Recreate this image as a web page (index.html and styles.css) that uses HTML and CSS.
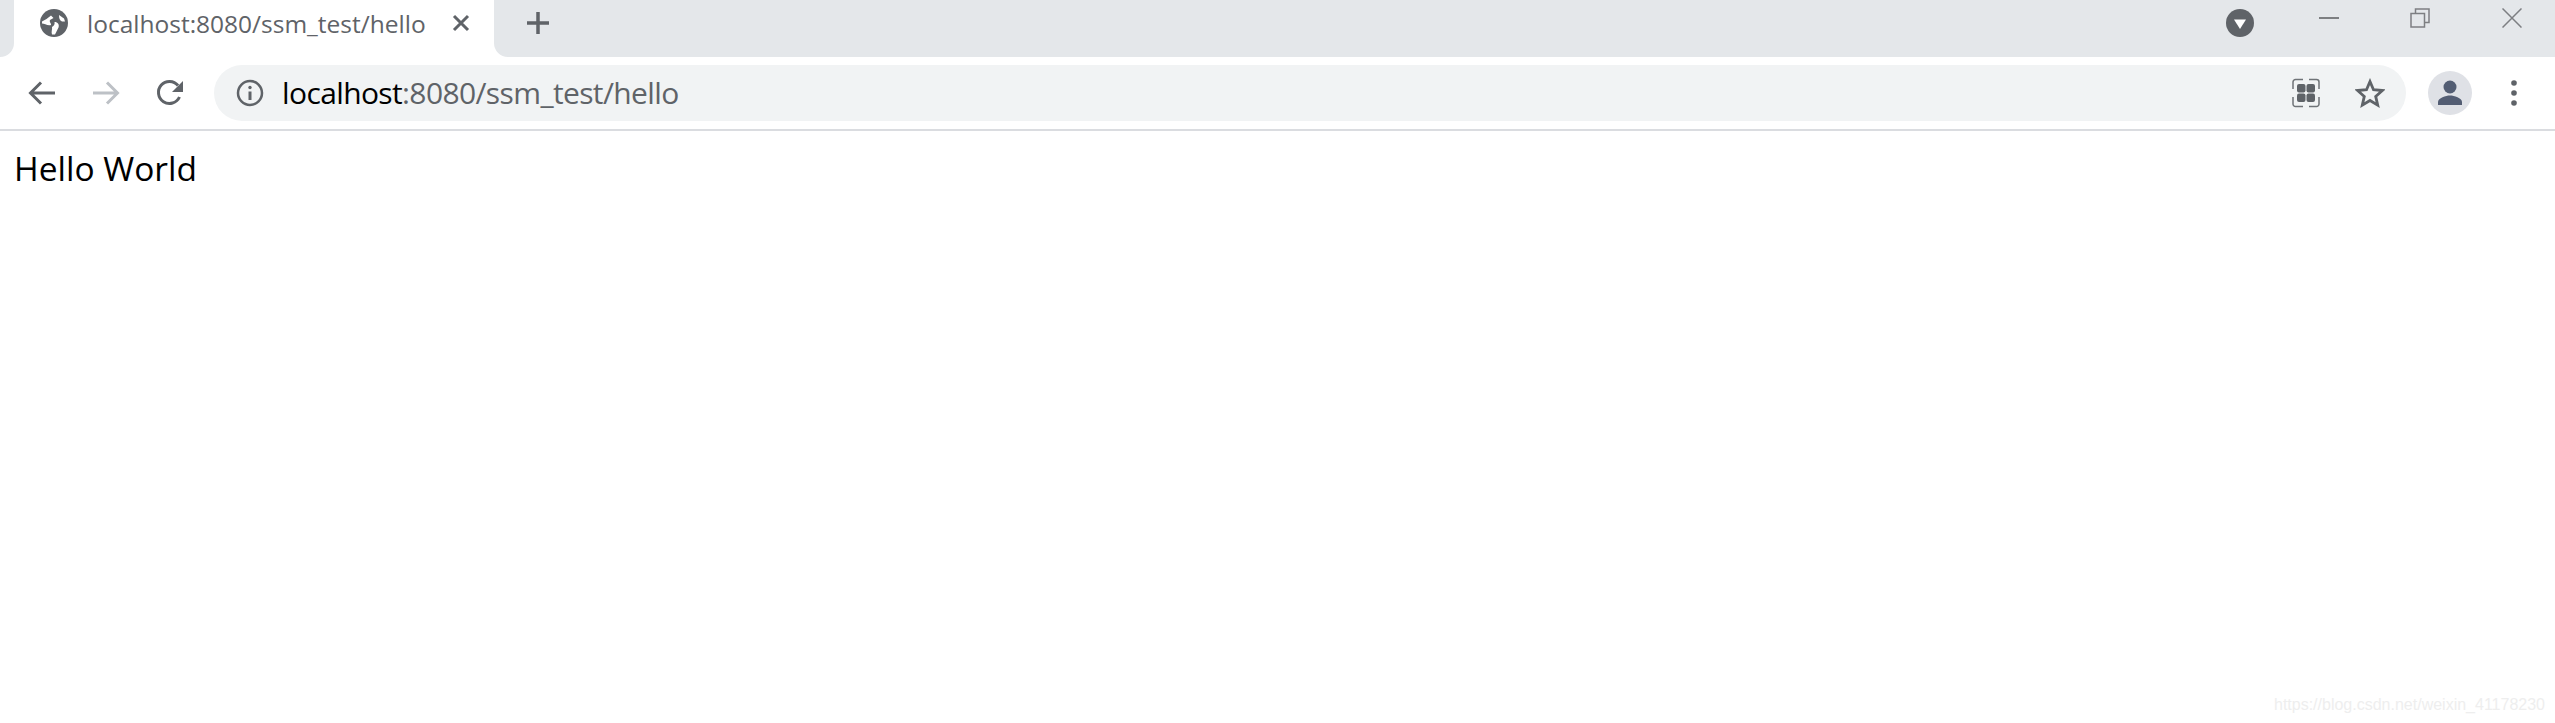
FILE: index.html
```html
<!DOCTYPE html>
<html lang="en">
<head>
<meta charset="utf-8">
<title>localhost:8080/ssm_test/hello</title>
<link rel="stylesheet" href="styles.css">
</head>
<body>
<header class="tabstrip">
  <div class="tab">
    <svg class="globe" width="28" height="28" viewBox="0 0 28 28"><circle cx="14" cy="14" r="14" fill="#5f6368"/><path d="M2 12.500C5 11 8 9 11 6.500l2.500 2.500-3.500 2c-1 2 1.500 3.500 1 5-3.500 1-6.500-1.500-9-1.500z" fill="#fff"/><path d="M14.500 13c3.500 0 5 2.500 4 5.500L15 25.500h-3c-1-3 .5-5 0-7.500 2-1 3-3 2.500-5z" fill="#fff"/><path d="M19 6l5 3.500 1 3h-3c-2.500-1-3-3.500-3-6.500z" fill="#fff"/></svg>
    <span class="tab-title">localhost:8080/ssm_test/hello</span>
    <svg class="tab-close" width="18" height="18" viewBox="0 0 18 18"><path d="M2 2l14 14M16 2L2 16" stroke="#5f6368" stroke-width="3" fill="none"/></svg>
  </div>
  <svg class="newtab" width="24" height="24" viewBox="0 0 24 24"><path d="M12 1v22M1 12h22" stroke="#5f6368" stroke-width="3.500" fill="none"/></svg>
  <div class="window-actions">
    <svg class="tabsearch" width="28" height="28" viewBox="0 0 28 28"><circle cx="14" cy="14" r="14" fill="#5f6368"/><path d="M8 10.500h12L14 20z" fill="#fff"/></svg>
    <svg class="win-min" width="20" height="20" viewBox="0 0 20 20"><path d="M0 10h20" stroke="#7d7f82" stroke-width="2" fill="none"/></svg>
    <svg class="win-restore" width="20" height="20" viewBox="0 0 20 20"><path d="M1 5.500h13.500V19H1zM5.500 5.500V1H19v13.500h-4.500" stroke="#7d7f82" stroke-width="1.500" fill="none"/></svg>
    <svg class="win-close" width="20" height="20" viewBox="0 0 20 20"><path d="M.5.500l19 19M19.500.5l-19 19" stroke="#7d7f82" stroke-width="1.500" fill="none"/></svg>
  </div>
</header>
<nav class="toolbar">
  <svg class="nav-icon" width="28" height="28" viewBox="0 0 28 28"><path d="M27 14H3M13 3.500L2.500 14 13 24.500" stroke="#5f6368" stroke-width="3" fill="none"/></svg>
  <svg class="nav-icon" width="28" height="28" viewBox="0 0 28 28"><path d="M1 14h24M15 3.500L25.500 14 15 24.500" stroke="#bdc1c6" stroke-width="3" fill="none"/></svg>
  <svg class="nav-icon" width="28" height="28" viewBox="0 0 28 28"><path d="M23.500 18a11 11 0 1 1-1.500-11.500" stroke="#5f6368" stroke-width="3" fill="none"/><path d="M27 2v11H16z" fill="#5f6368"/></svg>
  <div class="omnibox">
    <svg class="info" width="28" height="28" viewBox="0 0 28 28"><circle cx="14" cy="14" r="12" stroke="#5f6368" stroke-width="2.500" fill="none"/><path d="M14 12.500V21" stroke="#5f6368" stroke-width="3" fill="none"/><circle cx="14" cy="8.500" r="1.700" fill="#5f6368"/></svg>
    <span class="url"><span class="host">localhost</span>:8080/ssm_test/hello</span>
    <svg class="apps" width="30" height="30" viewBox="0 0 30 30"><path d="M2 11V4a2.500 2.500 0 0 1 2.500-2.500H12M18 1.500h7.500A2.500 2.500 0 0 1 28 4v7M28 19v7a2.500 2.500 0 0 1-2.500 2.500H18M12 28.500H4.500A2.500 2.500 0 0 1 2 26v-7" stroke="#6f7377" stroke-width="1.500" fill="none"/><rect x="6" y="6" width="8.500" height="8.500" rx="2" fill="#5f6368"/><rect x="15.500" y="6" width="8.500" height="8.500" rx="2" fill="#5f6368"/><rect x="6" y="15.500" width="8.500" height="8.500" rx="2" fill="#5f6368"/><rect x="15.500" y="15.500" width="8.500" height="8.500" rx="2" fill="#5f6368"/></svg>
    <svg class="star" width="30" height="30" viewBox="0 0 30 30"><path d="M15 3.500l3.500 8.200 8.900.8-6.700 5.900 2 8.700-7.700-4.600-7.700 4.600 2-8.700-6.700-5.900 8.900-.8z" stroke="#5f6368" stroke-width="2.800" fill="none"/></svg>
  </div>
  <div class="avatar">
    <svg width="26" height="26" viewBox="0 0 26 26"><circle cx="13" cy="7" r="6.500" fill="#535d73"/><path d="M1 25v-3c0-4 8-6.500 12-6.500s12 2.500 12 6.500v3z" fill="#535d73"/></svg>
  </div>
  <svg class="menu" width="6" height="26" viewBox="0 0 6 26"><circle cx="3" cy="3" r="2.800" fill="#5f6368"/><circle cx="3" cy="13" r="2.800" fill="#5f6368"/><circle cx="3" cy="23" r="2.800" fill="#5f6368"/></svg>
</nav>
<main class="page">Hello World</main>
<div class="watermark">https://blog.csdn.net/weixin_41178230</div>
</body>
</html>
```
FILE: styles.css
```css
* { box-sizing: border-box; }
html, body { margin: 0; height: 100%; background: #fff; overflow: hidden; }
body { font-family: "Open Sans", "Noto Sans", sans-serif; position: relative; }
svg { display: block; flex: none; }

.tabstrip {
  height: 57px;
  background: #e4e7ea;
  display: flex;
  padding-left: 14px;
}
.tab {
  position: relative;
  width: 480px;
  height: 57px;
  background: #fff;
  display: flex;
  align-items: center;
  padding: 0 0 11px 26px;
}
.tab::before, .tab::after {
  content: "";
  position: absolute;
  bottom: 0;
  width: 14px;
  height: 14px;
  background: #fff;
}
.tab::before { left: -14px; clip-path: path("M14 0A14 14 0 0 1 0 14H14Z"); }
.tab::after { right: -14px; clip-path: path("M0 0A14 14 0 0 0 14 14H0Z"); }
.globe { margin-right: 19px; }
.tab-title { font-size: 24.500px; color: #5f6368; width: 368px; white-space: nowrap; }
.tab-close { margin-left: -3px; }
.newtab { margin: 11px 0 0 32px; }
.window-actions { margin-left: auto; height: 57px; display: flex; align-items: flex-start; padding-right: 33px; }
.tabsearch { margin-top: 9px; }
.win-min { margin-top: 8px; margin-left: 65px; }
.win-restore { margin-top: 8px; margin-left: 71px; }
.win-close { margin-top: 8px; margin-left: 72px; }

.toolbar {
  height: 74px;
  border-bottom: 2px solid #dadce0;
  display: flex;
  align-items: center;
  padding: 0 0 0 28px;
  background: #fff;
}
.nav-icon { margin-right: 36px; }
.omnibox {
  margin-left: -6px;
  width: 2192px;
  height: 56px;
  border-radius: 28px;
  background: #f1f3f4;
  display: flex;
  align-items: center;
  padding-left: 22px;
}
.info { margin-right: 18px; }
.url { font-size: 30px; letter-spacing: -0.620px; color: #5f6368; white-space: nowrap; flex: 1; margin-bottom: 2px; }
.host { color: #000; }
.apps { margin-right: 34px; }
.star { margin-right: 21px; }
.avatar {
  margin-left: 22px;
  width: 44px;
  height: 44px;
  border-radius: 50%;
  background: #dfe1e6;
  display: flex;
  align-items: center;
  justify-content: center;
}
.menu { margin-left: 39px; }

.page { padding: 13px 14px; font-size: 33.500px; line-height: 48px; color: #000; }
.watermark {
  position: absolute;
  right: 10px;
  bottom: 9px;
  font-family: "Liberation Sans", sans-serif;
  font-size: 16px;
  color: #eeeeee;
}
```
